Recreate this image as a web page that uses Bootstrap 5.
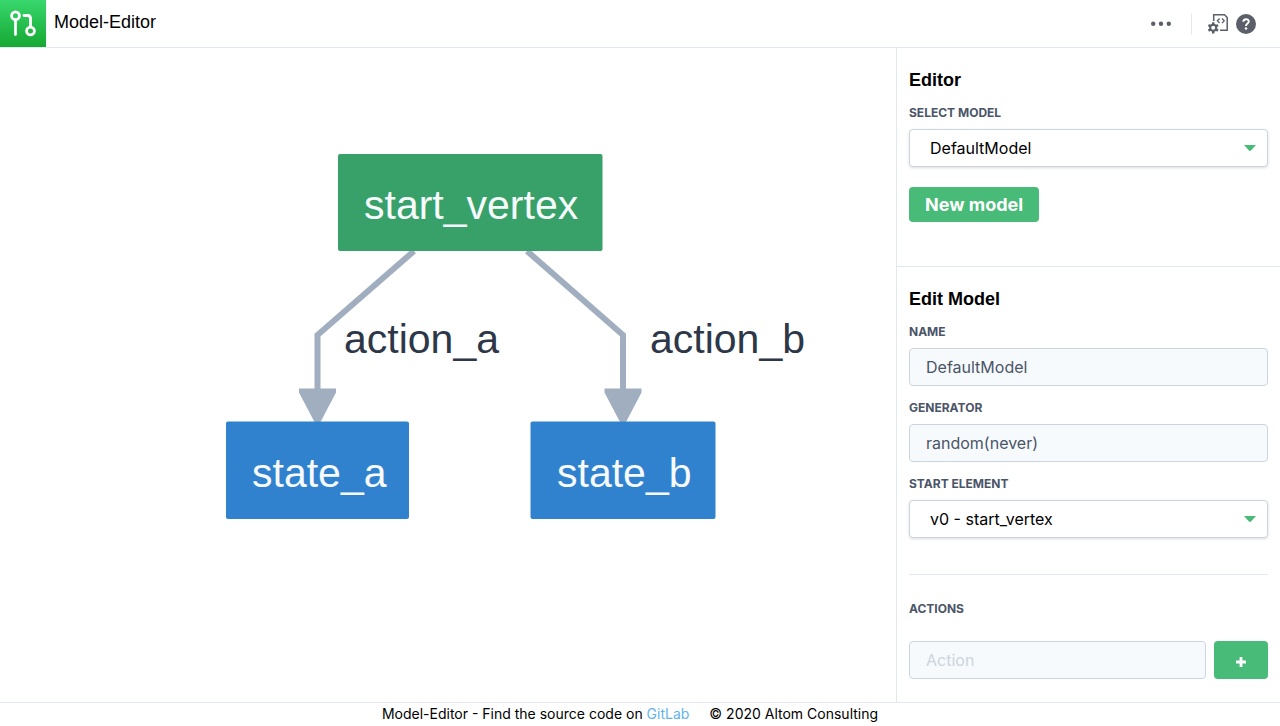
<!DOCTYPE html>
<html lang="en">
<head>
<meta charset="utf-8">
<meta name="viewport" content="width=device-width, initial-scale=1">
<title>Model-Editor</title>
<link href="https://cdn.jsdelivr.net/npm/bootstrap@5.3.0/dist/css/bootstrap.min.css" rel="stylesheet">
<style>
  :root { --line: #e2e8f0; --field-line: #cbd5e0; --brand: #48bb78; --ink: #4a5568; }
  body { font-family: Inter, "Liberation Sans", sans-serif; color: #000; background: #fff; }
  .helv { font-family: "Liberation Sans", Arial, sans-serif; }
  .topbar { height: 48px; border-bottom: 1px solid var(--line); }
  .logo { width: 46px; background: linear-gradient(#38d76d, #16a832); }
  .app-name { font-size: 18px; line-height: 24px; padding-bottom: 4px; }
  .icon-button { border: 0; background: none; padding: 0; display: flex; color: #5a5f69; }
  .divider { width: 1px; height: 20px; background: var(--line); margin: 0 16px; }
  .tools { padding-right: 24px; }
  .sidebar { width: 30%; border-left: 1px solid var(--line); }
  .panel { padding: 20px 12px 23px; }
  .panel-first { padding-bottom: 44px; border-bottom: 1px solid var(--line); }
  .panel-title { font-size: 18px; line-height: 25px; margin-bottom: 12px; font-weight: 700; }
  .caption-label { display: block; font-size: 12px; line-height: 16px; font-weight: 700; color: var(--ink); margin-bottom: 8px; text-transform: uppercase; }
  .field { margin-bottom: 14px; }
  .form-control, .form-select { height: 38px; font-size: 16px; line-height: 24px; border-color: var(--field-line); border-radius: 4px; }
  .form-control { padding: 6px 16px; color: var(--ink); background: #f7fafc; }
  .form-control::placeholder { color: #cbd5e0; }
  .form-select { padding: 6px 32px 6px 20px; color: #000; box-shadow: 0 1px 3px rgba(0,0,0,.14);
    background-image: url("data:image/svg+xml,%3Csvg xmlns='http://www.w3.org/2000/svg' viewBox='0 0 12 6'%3E%3Cpath fill='%2348bb78' d='M0 0h12L7 5.500Q6 6.400 5 5.500z'/%3E%3C/svg%3E");
    background-size: 12px 6px; background-position: right 11px center; }
  .btn-brand { background: var(--brand); color: #fff; font-weight: 700; border: 0; border-radius: 4px; }
  .btn-brand:hover { background: #38a169; color: #fff; }
  .btn-new { margin-top: 6px; padding: 5px 16px; font-size: 18px; line-height: 25px; }
  .btn-add { width: 54px; height: 38px; padding: 3px 0 0; }
  .rule { margin: 36px 0 26px; border-color: var(--line); opacity: 1; }
  .actions-label { margin-bottom: 24px; }
  .foot { height: 24px; border-top: 1px solid var(--line); font-size: 14px; line-height: 22px; gap: 20px; padding-right: 20px; }
  .foot a { color: #63b3ed; text-decoration: none; }
  .graph text { font-size: 41px; fill: #f7fafc; }
  .graph .edge-label { fill: #2d3748; }
  .edge { fill: none; stroke: #a0aec0; stroke-width: 6; }
</style>
</head>
<body>
<div class="d-flex flex-column min-vh-100">
  <header class="topbar d-flex">
    <div class="logo d-flex align-items-center justify-content-center">
      <svg width="46" height="47" viewBox="0 0 46 47" fill="none" stroke="#fff" stroke-width="2.800" stroke-linecap="round" stroke-linejoin="round" aria-hidden="true">
        <circle cx="15.500" cy="15.800" r="3.900"/><path d="M15.500 20V34.500M24 15.500H27.500Q30.500 15.500 30.500 18.500V26.500"/><circle cx="30.500" cy="31" r="3.900"/>
      </svg>
    </div>
    <div class="app-name helv align-self-center ps-2">Model-Editor</div>
    <div class="tools d-flex align-items-center ms-auto">
      <button class="icon-button" type="button" aria-label="More">
        <svg width="24" height="20" viewBox="0 0 24 20" fill="currentColor"><circle cx="2.200" cy="9.700" r="2.200"/><circle cx="10" cy="9.700" r="2.200"/><circle cx="17.800" cy="9.700" r="2.200"/></svg>
      </button>
      <span class="divider"></span>
      <div class="d-flex gap-2">
      <button class="icon-button" type="button" aria-label="Model settings">
        <svg width="20" height="20" viewBox="0 0 20 20" fill="none" stroke="currentColor" stroke-width="1.500">
          <path d="M5.700 7V.8H16.500L19.200 3.500V16.200H12"/>
          <path d="M11.600 4.500 9.400 6.800 11.600 9.100M14 4.500 16.200 6.800 14 9.100" stroke-width="1.300"/>
          <circle cx="5.200" cy="13.800" r="3" stroke-width="2"/>
          <path d="M5.200 8.200V10.500M5.200 17.100V19.400M.4 11 2.400 12.200M8 15.400 10 16.600M.4 16.600 2.400 15.400M8 12.200 10 11" stroke-width="2.400"/>
        </svg>
      </button>
      <button class="icon-button" type="button" aria-label="Help">
        <svg width="20" height="20" viewBox="0 0 20 20"><circle cx="10" cy="10" r="10" fill="currentColor"/><path d="M7.300 7.700C7.300 4.400 12.800 4.400 12.800 7.600C12.800 9.500 10 9.500 10 11.900" fill="none" stroke="#fff" stroke-width="1.900"/><circle cx="10" cy="14.600" r="1.250" fill="#fff"/></svg>
      </button>
      </div>
    </div>
  </header>

  <main class="d-flex flex-grow-1">
    <section class="flex-grow-1 d-flex align-items-center" aria-label="Graph">
      <svg class="graph helv w-100 h-auto" viewBox="0 0 896 654" role="img" aria-label="Model graph">
        <path class="edge" d="M414 203 317.500 287V350"/>
        <path class="edge" d="M527 203 623 287V350"/>
        <path d="M299 340.500h37v4L320.500 374h-6L299 344.500zM604.500 340.500h37v4L626 374h-6L604.500 344.500z" fill="#a0aec0"/>
        <rect x="338" y="106" width="264.500" height="97" rx="2" fill="#38a169"/>
        <rect x="226" y="373.500" width="183" height="97.500" rx="2" fill="#3182ce"/>
        <rect x="530.500" y="373.500" width="185" height="97.500" rx="2" fill="#3182ce"/>
        <text x="364" y="171">start_vertex</text>
        <text x="252" y="439">state_a</text>
        <text x="557" y="439">state_b</text>
        <text class="edge-label" x="344" y="305">action_a</text>
        <text class="edge-label" x="650" y="305">action_b</text>
      </svg>
    </section>

    <aside class="sidebar flex-shrink-0">
      <section class="panel panel-first">
        <h2 class="panel-title helv">Editor</h2>
        <div class="field">
          <label class="caption-label" for="model">Select model</label>
          <select class="form-select" id="model"><option>DefaultModel</option></select>
        </div>
        <button class="btn btn-brand btn-new" type="button">New model</button>
      </section>
      <section class="panel">
        <h2 class="panel-title helv">Edit Model</h2>
        <div class="field">
          <label class="caption-label" for="name">Name</label>
          <input class="form-control" id="name" type="text" value="DefaultModel">
        </div>
        <div class="field">
          <label class="caption-label" for="generator">Generator</label>
          <input class="form-control" id="generator" type="text" value="random(never)">
        </div>
        <div>
          <label class="caption-label" for="start">Start element</label>
          <select class="form-select" id="start"><option>v0 - start_vertex</option></select>
        </div>
        <hr class="rule">
        <label class="caption-label actions-label" for="action">Actions</label>
        <div class="d-flex gap-2">
          <input class="form-control" id="action" type="text" placeholder="Action">
          <button class="btn btn-brand btn-add flex-shrink-0 d-flex align-items-center justify-content-center" type="button" aria-label="Add action">
            <svg width="10" height="10" viewBox="0 0 10 10" stroke="#fff" stroke-width="2.800"><path d="M5 0V10M0 5H10"/></svg>
          </button>
        </div>
      </section>
    </aside>
  </main>

  <footer class="foot d-flex justify-content-center">
    <span>Model-Editor - Find the source code on <a href="#">GitLab</a></span>
    <span>© 2020 Altom Consulting</span>
  </footer>
</div>
<script src="https://cdn.jsdelivr.net/npm/bootstrap@5.3.0/dist/js/bootstrap.bundle.min.js"></script>
</body>
</html>
